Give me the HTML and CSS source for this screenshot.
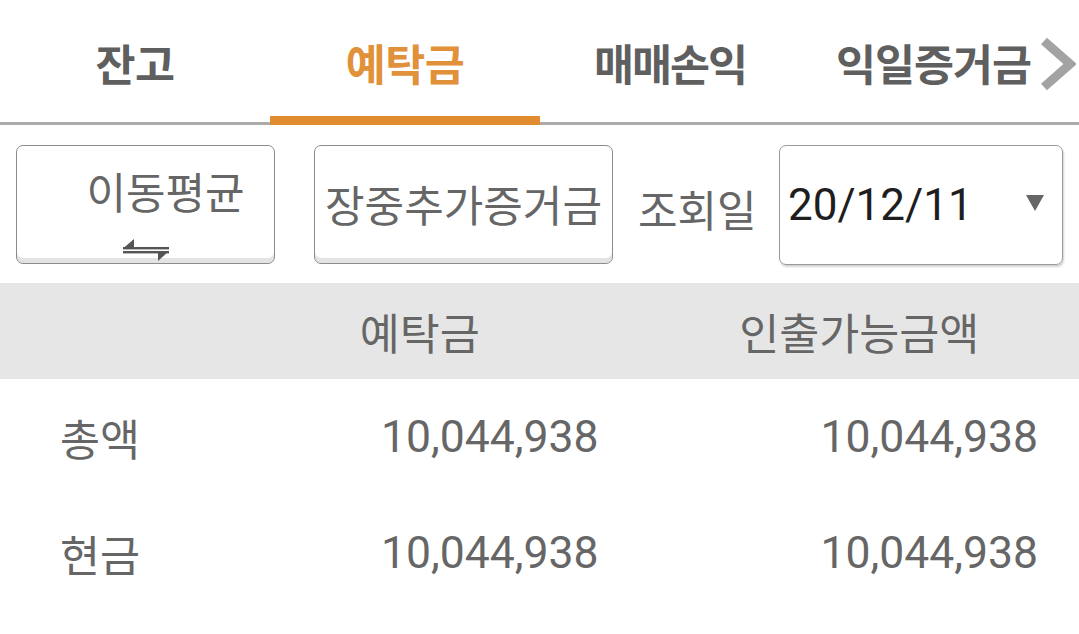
FILE: index.html
```html
<!DOCTYPE html>
<html lang="ko">
<head>
<meta charset="utf-8">
<title>예탁금</title>
<link rel="stylesheet" href="styles.css">
</head>
<body>
<div class="screen">
  <nav class="tabs">
    <div class="tab tab-1">잔고</div>
    <div class="tab tab-2 active">예탁금</div>
    <div class="tab tab-3">매매손익</div>
    <div class="tab tab-4">익일증거금</div>
    <svg class="chevron" width="36" height="54" viewBox="0 0 36 54"><path d="M4 4 L30 27 L4 50" fill="none" stroke="#a3a3a3" stroke-width="9"/></svg>
  </nav>

  <div class="toolbar">
    <button class="btn btn-avg">
      <span class="btn-label">이동평균</span>
      <svg class="swap" width="46" height="22" viewBox="0 0 46 22">
        <rect x="0" y="8" width="46" height="2.4" fill="#555"/>
        <polygon points="0,9.5 11,0 11,9.5" fill="#555"/>
        <rect x="0" y="12" width="46" height="2.4" fill="#555"/>
        <polygon points="35,12 46,12 35,22" fill="#555"/>
      </svg>
    </button>
    <button class="btn btn-margin"><span class="btn-label">장중추가증거금</span></button>
    <span class="date-label">조회일</span>
    <div class="date-select">
      <span class="date-value">20/12/11</span>
      <span class="caret"></span>
    </div>
  </div>

  <div class="table">
    <div class="th"></div>
    <div class="th">예탁금</div>
    <div class="th">인출가능금액</div>

    <div class="td label">총액</div>
    <div class="td num">10,044,938</div>
    <div class="td num">10,044,938</div>

    <div class="td label">현금</div>
    <div class="td num">10,044,938</div>
    <div class="td num">10,044,938</div>
  </div>
</div>
</body>
</html>
```

FILE: styles.css
```css
* { box-sizing: border-box; }
html, body { margin: 0; padding: 0; background: #fff; }
body {
  font-family: Roboto, "Noto Sans CJK KR", sans-serif;
  color: #666;
  width: 1079px;
  height: 634px;
  overflow: hidden;
}
.screen { width: 1079px; }

/* tabs */
.tabs {
  position: relative;
  display: flex;
  height: 125px;
  border-bottom: 3px solid #ababab;
}
.tab {
  position: relative;
  height: 122px;
  display: flex;
  align-items: center;
  justify-content: center;
  font-family: "Noto Sans CJK KR", sans-serif;
  font-weight: 700;
  font-size: 43.5px;
  letter-spacing: -0.5px;
  color: #5f5f5f;
  padding-top: 2px;
}
.tab-1 { width: 270px; }
.tab-2 { width: 270px; }
.tab-3 { width: 270px; padding-right: 10px; letter-spacing: -2px; }
.tab-4 { width: 269px; padding-right: 22px; letter-spacing: -1px; }
.tab.active { color: #e0913a; }
.tab.active::after {
  content: "";
  position: absolute;
  left: 0;
  right: 0;
  bottom: -3px;
  height: 9px;
  background: #e08c2f;
}
.chevron {
  position: absolute;
  right: 3px;
  top: 37px;
}

/* toolbar */
.toolbar {
  display: flex;
  align-items: center;
  padding: 20px 16px 19px 16px;
  height: 158px;
}
.btn {
  flex-shrink: 0;
  height: 119px;
  border: 1.5px solid #8c8c8c;
  border-radius: 7px;
  background: #fff;
  box-shadow: inset 0 -5px 0 #e3e3e3;
  font-family: "Noto Sans CJK KR", sans-serif;
  font-size: 43px;
  color: #666;
  padding: 0;
  margin: 0;
  display: flex;
  flex-direction: column;
  align-items: center;
  justify-content: center;
}
.btn-avg {
  width: 259px;
  justify-content: flex-start;
  padding-top: 16px;
  padding-left: 40px;
}
.btn-avg .btn-label { line-height: 56px; }
.swap { margin-top: 21px; margin-left: -40px; }
.btn-margin {
  width: 299px;
  margin-left: 39px;
  padding-bottom: 2px;
}
.btn-label { line-height: 1; white-space: nowrap; }
.date-label {
  flex: 1;
  padding-left: 25px;
  font-family: "Noto Sans CJK KR", sans-serif;
  font-size: 43px;
  color: #666;
  white-space: nowrap;
  padding-top: 6px;
}
.date-select {
  flex-shrink: 0;
  width: 284px;
  height: 120px;
  border: 1px solid #9a9a9a;
  border-radius: 7px;
  box-shadow: 1px 2px 2px rgba(0,0,0,0.18);
  display: flex;
  align-items: center;
  justify-content: space-between;
  padding: 0 18px 0 8px;
}
.date-value {
  font-family: Roboto, sans-serif;
  font-size: 44px;
  color: #1e1e1e;
}
.caret {
  width: 0;
  height: 0;
  border-left: 9px solid transparent;
  border-right: 9px solid transparent;
  border-top: 16px solid #666;
  margin-bottom: 4px;
}

/* table */
.table {
  display: grid;
  grid-template-columns: 200px 1fr 1fr;
}
.th {
  background: #e6e6e6;
  height: 96px;
  display: flex;
  align-items: center;
  justify-content: center;
  font-family: "Noto Sans CJK KR", sans-serif;
  font-size: 43.5px;
  color: #666;
}
.td {
  height: 116px;
  display: flex;
  align-items: center;
  color: #666;
}
.td.label {
  padding-left: 60px;
  font-family: "Noto Sans CJK KR", sans-serif;
  font-size: 43.5px;
}
.td.num {
  justify-content: flex-end;
  padding-right: 41px;
  font-family: Roboto, sans-serif;
  font-size: 44.5px;
}
```
